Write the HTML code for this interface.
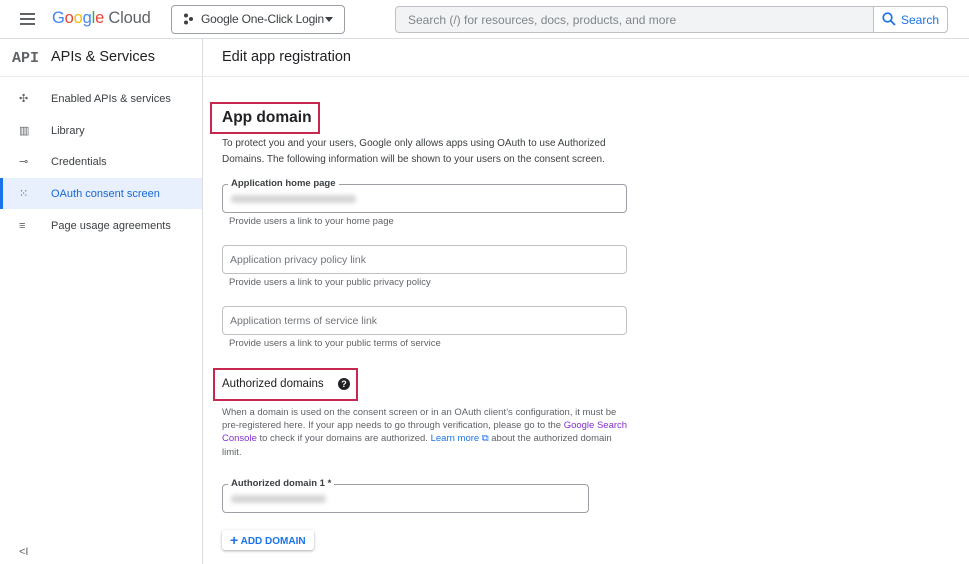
<!DOCTYPE html>
<html><head><meta charset="utf-8"><style>
*{box-sizing:border-box;margin:0;padding:0}
body{width:969px;height:564px;overflow:hidden;background:#fff;font-family:"Liberation Sans",Arial,sans-serif;color:#202124;position:relative}
.a{position:absolute}
.line{position:absolute;background:#dadce0}
.nav{position:absolute;left:0;width:202px;height:31px;font-size:11px;color:#3c4043;display:flex;align-items:center}
.nav span.t{position:absolute;left:51px}
.nav .ic{position:absolute;left:19px;color:#5f6368;font-size:11px}
.field{position:absolute;border:1px solid #9aa0a6;border-radius:4px;height:29px;width:405px;left:222px}
.ph{position:absolute;left:7px;top:8px;font-size:10.5px;color:#70757a}
.help{position:absolute;left:229px;font-size:9.5px;color:#5f6368}
.lbl{position:absolute;left:5px;top:-7px;background:#fff;padding:0 3px;font-size:9.5px;font-weight:bold;color:#3c4043}
.blur{position:absolute;left:8px;top:10px;height:8px;background:#d6d6d6;filter:blur(2px);border-radius:3px}
a{color:#1a73e8}
</style></head><body>
<div class="a" style="left:20px;top:13px;width:15px;height:2px;background:#5f6368;box-shadow:0 5px 0 #5f6368,0 10px 0 #5f6368"></div>
<div class="a" style="left:52px;top:9px;font-size:16.5px;letter-spacing:-0.2px"><span style="color:#4285f4">G</span><span style="color:#ea4335">o</span><span style="color:#fbbc04">o</span><span style="color:#4285f4">g</span><span style="color:#34a853">l</span><span style="color:#ea4335">e</span><span style="color:#5f6368"> Cloud</span></div>
<div class="a" style="left:171px;top:5px;width:174px;height:29px;border:1px solid #9aa0a6;border-radius:4px"></div>
<svg class="a" style="left:183px;top:13px" width="10" height="12"><circle cx="3" cy="2.5" r="2" fill="#3c4043"/><circle cx="8" cy="6" r="2" fill="#3c4043"/><circle cx="3" cy="9.5" r="2" fill="#3c4043"/></svg>
<div class="a" style="left:201px;top:12px;font-size:12px;color:#3c4043;letter-spacing:-0.2px">Google One-Click Login</div>
<div class="a" style="left:325px;top:17px;border-left:4px solid transparent;border-right:4px solid transparent;border-top:5px solid #3c4043"></div>
<div class="a" style="left:395px;top:6px;width:553px;height:27px;border:1px solid #bdc1c6;border-radius:4px;background:#f1f3f4"></div>
<div class="a" style="left:873px;top:6px;width:75px;height:27px;border:1px solid #bdc1c6;border-radius:0 4px 4px 0;background:#fff"></div>
<div class="a" style="left:408px;top:13px;font-size:12px;color:#80868b">Search (/) for resources, docs, products, and more</div>
<svg class="a" style="left:882px;top:12px" width="14" height="14"><circle cx="5.5" cy="5.5" r="4.3" fill="none" stroke="#1a73e8" stroke-width="1.7"/><line x1="8.6" y1="8.6" x2="13" y2="13" stroke="#1a73e8" stroke-width="1.8"/></svg>
<div class="a" style="left:901px;top:13px;font-size:12px;color:#1a73e8">Search</div>
<div class="line" style="left:0;top:38px;width:969px;height:1px"></div>
<div class="line" style="left:202px;top:38px;width:1px;height:526px"></div>
<div class="a" style="left:12px;top:50px;font-family:'Liberation Mono',monospace;font-weight:bold;font-size:15px;color:#5f6368">API</div>
<div class="a" style="left:51px;top:49px;font-size:14.5px;color:#202124">APIs &amp; Services</div>
<div class="line" style="left:0;top:76px;width:969px;height:1px;background:#e8eaed"></div>
<div class="a" style="left:222px;top:49px;font-size:14.5px;color:#202124">Edit app registration</div>
<div class="nav" style="top:83px"><span class="ic">✣</span><span class="t">Enabled APIs &amp; services</span></div>
<div class="nav" style="top:115px"><span class="ic">▥</span><span class="t">Library</span></div>
<div class="nav" style="top:146px"><span class="ic">⊸</span><span class="t">Credentials</span></div>
<div class="nav" style="top:178px;background:#e8f0fe;color:#1967d2"><div class="a" style="left:0;top:0;width:3px;height:31px;background:#1a73e8"></div><span class="ic" style="color:#1967d2">⁙</span><span class="t">OAuth consent screen</span></div>
<div class="nav" style="top:210px"><span class="ic">≡</span><span class="t">Page usage agreements</span></div>
<div class="a" style="left:19px;top:546px;font-size:11px;color:#5f6368">&lt;I</div>
<div class="a" style="left:210px;top:102px;width:110px;height:32px;border:2px solid #c8284f"></div>
<div class="a" style="left:222px;top:109px;font-size:15.5px;font-weight:bold;color:#202124">App domain</div>
<div class="a" style="left:222px;top:136px;font-size:10px;color:#3c4043;line-height:15.5px">To protect you and your users, Google only allows apps using OAuth to use Authorized<br>Domains. The following information will be shown to your users on the consent screen.</div>
<div class="field" style="top:184px"><div class="lbl">Application home page</div><div class="blur" style="width:125px"></div></div>
<div class="help" style="top:216px">Provide users a link to your home page</div>
<div class="field" style="top:245px;border-color:#bdc1c6"><div class="ph">Application privacy policy link</div></div>
<div class="help" style="top:277px">Provide users a link to your public privacy policy</div>
<div class="field" style="top:306px;border-color:#bdc1c6"><div class="ph">Application terms of service link</div></div>
<div class="help" style="top:338px">Provide users a link to your public terms of service</div>
<div class="a" style="left:213px;top:368px;width:145px;height:33px;border:2px solid #c8284f"></div>
<div class="a" style="left:222px;top:378px;font-size:11.5px;color:#202124">Authorized domains</div>
<div class="a" style="left:338px;top:378px;width:12px;height:12px;border-radius:50%;background:#202124;color:#fff;font-size:9px;font-weight:bold;text-align:center;line-height:12px">?</div>
<div class="a" style="left:222px;top:406px;width:440px;white-space:nowrap;font-size:9.5px;color:#5f6368;line-height:13.2px">When a domain is used on the consent screen or in an OAuth client’s configuration, it must be<br>pre-registered here. If your app needs to go through verification, please go to the <a style="color:#8430ce">Google Search</a><br><a style="color:#8430ce">Console</a> to check if your domains are authorized. <a>Learn more</a> <span style="color:#1a73e8">⧉</span> about the authorized domain<br>limit.</div>
<div class="field" style="top:484px;width:367px"><div class="lbl">Authorized domain 1 *</div><div class="blur" style="width:95px"></div></div>
<div class="a" style="left:222px;top:530px;width:92px;height:20px;border-radius:3px;box-shadow:0 1px 2px rgba(60,64,67,.3),0 1px 3px rgba(60,64,67,.15);font-size:10px;font-weight:bold;color:#1a73e8;line-height:20px;padding-left:8px"><span style="font-size:14px;vertical-align:-1px">+</span> ADD DOMAIN</div>
</body></html>
